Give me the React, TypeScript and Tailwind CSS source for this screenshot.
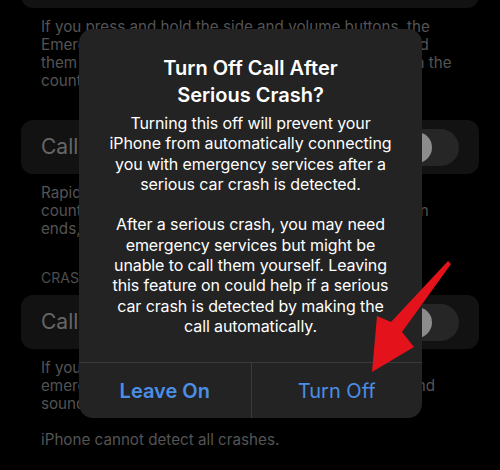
import React from 'react';

function Toggle() {
  return (
    <div className="flex h-[37px] w-[61px] items-center rounded-full bg-[#262626] px-[3px]">
      <div className="h-[31px] w-[31px] rounded-full bg-[#8c8c8c]" />
    </div>
  );
}

function Note({ lines }: { lines: string[] }) {
  return (
    <div className="px-[20px] text-[15.2px] leading-[18px] text-[#545454]">
      {lines.map((l) => (
        <div key={l} className="whitespace-nowrap">
          {l}
        </div>
      ))}
    </div>
  );
}

const body = [
  'Turning this off will prevent your',
  'iPhone from automatically connecting',
  'you with emergency services after a',
  'serious car crash is detected.',
  '',
  'After a serious crash, you may need',
  'emergency services but might be',
  'unable to call them yourself. Leaving',
  'this feature on could help if a serious',
  'car crash is detected by making the',
  'call automatically.',
];

export default function App() {
  return (
    <div
      className="relative h-[470px] w-[500px] overflow-hidden bg-black"
      style={{ fontFamily: 'Inter, "Noto Sans", sans-serif' }}
    >
      {/* dimmed settings page */}
      <div className="px-[21px]">
        <div className="-mt-[40px] h-[48px] rounded-xl bg-[#121212]" />
        <div className="mt-[10px]">
          <Note
            lines={[
              'If you press and hold the side and volume buttons, the',
              'Emergency SOS slider will appear. Keep holding it and',
              'them a countdown begins and then you will be put on the',
              'countdown will sound.',
            ]}
          />
        </div>
        <div className="mt-[30px] flex h-[54px] items-center justify-between rounded-xl bg-[#121212] pl-[20px] pr-[20px]">
          <span className="text-[21px] text-[#666]">Call with Hold and Release</span>
          <Toggle />
        </div>
        <div className="mt-[10px]">
          <Note
            lines={[
              'Rapidly press the side button five times to start a',
              'countdown and sound an alarm. When the countdown',
              'ends, Emergency Services will be called.',
            ]}
          />
        </div>
        <div className="mt-[31px] px-[20px] text-[14px] leading-[18px] text-[#4e4e4e]">CRASH DETECTION</div>
        <div className="mt-[8px] flex h-[54px] items-center justify-between rounded-xl bg-[#121212] pl-[20px] pr-[20px]">
          <span className="text-[21px] text-[#666]">Call After Severe Crash</span>
          <Toggle />
        </div>
        <div className="mt-[10px]">
          <Note
            lines={[
              'If your iPhone detects a severe car crash, it will',
              'emergency services after a 20-second countdown and',
              'sound an alarm.',
            ]}
          />
        </div>
        <div className="mt-[18px]">
          <Note lines={['iPhone cannot detect all crashes.']} />
        </div>
      </div>

      {/* alert */}
      <div className="absolute left-[79px] top-[29px] w-[343px] overflow-hidden rounded-[14px] bg-[#232323]">
        <div className="px-[8px] pt-[26px] pb-[26px] text-center text-white">
          <div className="text-[20px] font-semibold leading-[27px]">
            Turn Off Call After
            <br />
            Serious Crash?
          </div>
          <div className="mt-[4px] text-[16px] leading-[20.3px] tracking-[-0.1px]">
            {body.map((l, i) => (
              <div key={i} className="h-[20.3px] whitespace-nowrap">
                {l}
              </div>
            ))}
          </div>
        </div>
        <div className="grid h-[56px] grid-cols-2 border-t border-[#3a3a3a] text-[20px] text-[#4b8ee6]">
          <div className="flex items-center justify-center font-semibold">Leave On</div>
          <div className="flex items-center justify-center border-l border-[#3a3a3a]">Turn Off</div>
        </div>
      </div>

      {/* annotation arrow */}
      <svg className="absolute left-0 top-0" width="500" height="470" viewBox="0 0 500 470">
        <polygon
          points="448,261 451,264 402,332 414,347 372,372 377,316 391,322"
          fill="#e3121b"
        />
      </svg>
    </div>
  );
}
